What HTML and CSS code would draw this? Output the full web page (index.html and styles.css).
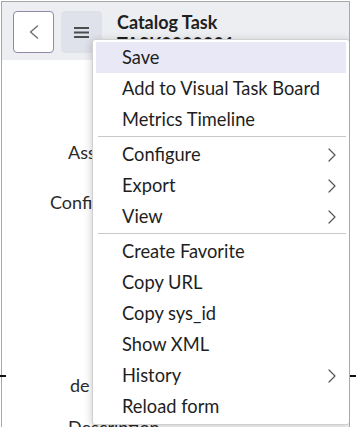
FILE: index.html
```html
<!DOCTYPE html>
<html>
<head>
<meta charset="utf-8">
<link rel="stylesheet" href="styles.css">
</head>
<body>
<div class="frame">
  <header class="header">
    <button class="btn btn-back" aria-label="Back">
      <svg width="10" height="14" viewBox="0 0 10 14"><polyline points="8.5,1 1.5,7 8.5,13" fill="none" stroke="#6a6a6a" stroke-width="1.3" stroke-linejoin="round" stroke-linecap="round"/></svg>
    </button>
    <button class="btn btn-menu" aria-label="Menu">
      <svg width="15" height="11" viewBox="0 0 15 11"><rect x="0" y="0" width="15" height="2" fill="#4d4d4d"/><rect x="0" y="4.5" width="15" height="2" fill="#4d4d4d"/><rect x="0" y="9" width="15" height="2" fill="#4d4d4d"/></svg>
    </button>
    <div class="title">
      <div class="title-main">Catalog Task</div>
      <div class="title-sub">TASK0000001</div>
    </div>
  </header>
  <div class="form">
    <div class="field f1">Assigned to</div>
    <div class="field f2">Configuration item</div>
    <div class="field f3">de</div>
    <div class="field f4">Description</div>
  </div>
  <div class="menu">
    <div class="item active">Save</div>
    <div class="item">Add to Visual Task Board</div>
    <div class="item">Metrics Timeline</div>
    <div class="sep"></div>
    <div class="item">Configure<svg class="chev" width="8" height="14" viewBox="0 0 8 14"><polyline points="1,1 7,7 1,13" fill="none" stroke="#555" stroke-width="1.2" stroke-linejoin="round" stroke-linecap="round"/></svg></div>
    <div class="item">Export<svg class="chev" width="8" height="14" viewBox="0 0 8 14"><polyline points="1,1 7,7 1,13" fill="none" stroke="#555" stroke-width="1.2" stroke-linejoin="round" stroke-linecap="round"/></svg></div>
    <div class="item">View<svg class="chev" width="8" height="14" viewBox="0 0 8 14"><polyline points="1,1 7,7 1,13" fill="none" stroke="#555" stroke-width="1.2" stroke-linejoin="round" stroke-linecap="round"/></svg></div>
    <div class="sep"></div>
    <div class="item">Create Favorite</div>
    <div class="item">Copy URL</div>
    <div class="item">Copy sys_id</div>
    <div class="item">Show XML</div>
    <div class="item">History<svg class="chev" width="8" height="14" viewBox="0 0 8 14"><polyline points="1,1 7,7 1,13" fill="none" stroke="#555" stroke-width="1.2" stroke-linejoin="round" stroke-linecap="round"/></svg></div>
    <div class="item">Reload form</div>
  </div>
</div>
<div class="mark mark-left"></div>
<div class="mark mark-right"></div>
</body>
</html>
```
FILE: styles.css
```css
html, body {
  margin: 0;
  padding: 0;
  background: #ffffff;
  font-family: Lato, "Open Sans", sans-serif;
  color: #1e1e1e;
}
body {
  position: relative;
  width: 356px;
  height: 427px;
  overflow: hidden;
}
.frame {
  position: relative;
  margin: 1px 0 0 1px;
  width: 347px;
  height: 430px;
  border-left: 1px solid #a8a8a8;
  border-top: 1px solid #a8a8a8;
  border-right: 1px solid #a8a8a8;
  overflow: hidden;
}
.header {
  display: flex;
  align-items: flex-start;
  height: 58px;
  padding: 9px 0 0 11px;
  box-sizing: border-box;
  background: #eceef1;
}
.btn {
  width: 41px;
  height: 42px;
  border-radius: 4px;
  display: flex;
  align-items: center;
  justify-content: center;
  padding: 0;
  box-sizing: border-box;
}
.btn-back {
  background: #ffffff;
  border: 1px solid #8e8aa6;
}
.btn-menu {
  margin-left: 7px;
  background: #dfe2ea;
  border: none;
}
.title {
  margin-left: 15px;
  margin-top: 0;
  font-weight: 700;
  font-size: 18px;
  line-height: 22px;
  color: #1f1f1f;
}
.form {
  padding-top: 81px;
  font-size: 18px;
  color: #2a2a2a;
}
.field {
  height: 22px;
  line-height: 22px;
  white-space: nowrap;
}
.f1 { padding-left: 66px; }
.f2 { padding-left: 48px; margin-top: 28px; }
.f3 { padding-left: 68px; margin-top: 161px; }
.f4 { padding-left: 66px; margin-top: 20px; }
.menu {
  position: absolute;
  left: 90px;
  top: 37px;
  width: 258px;
  box-sizing: border-box;
  padding: 2px 3px;
  background: #ffffff;
  border: 1px solid #d0d0d0;
  border-radius: 3px;
  box-shadow: 0 2px 8px rgba(0, 0, 0, 0.22);
}
.item {
  display: flex;
  align-items: center;
  justify-content: space-between;
  box-sizing: border-box;
  height: 31px;
  padding: 0 10px 2px 26px;
  font-size: 18.3px;
  color: #1e1e1e;
  white-space: nowrap;
}
.item.active {
  background: #e9e8f6;
}
.chev {
  margin-top: 2px;
}
.sep {
  height: 1px;
  background: #c9c9c9;
  margin: 1px 0 2px 2px;
}
.mark {
  position: absolute;
  top: 375px;
  height: 2px;
  width: 6px;
  background: #111;
}
.mark-left { left: 0; }
.mark-right { left: 350px; }
```
